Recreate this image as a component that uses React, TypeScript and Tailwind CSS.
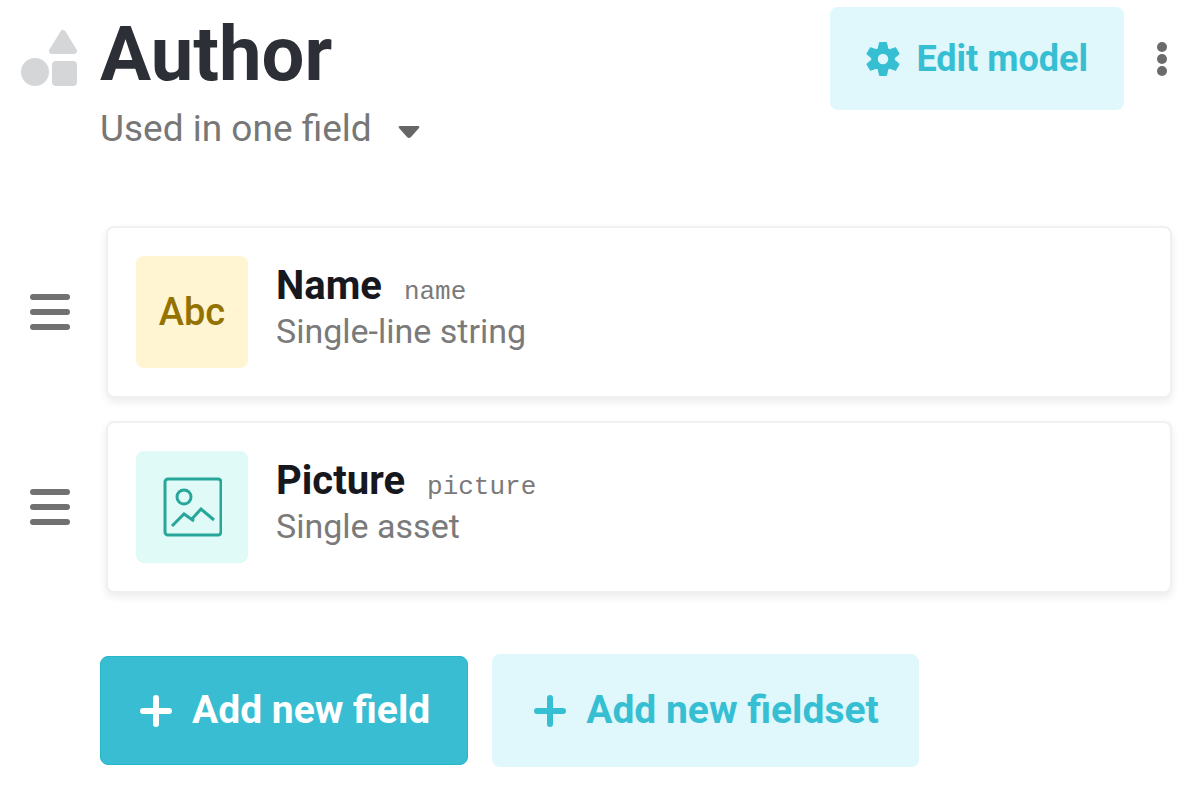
import type { ReactNode } from "react";

function ModelIcon() {
  return (
    <svg viewBox="0 0 58 58" className="h-[58px] w-[58px] shrink-0 fill-[#d4d6d8] stroke-[#d4d6d8]" strokeLinejoin="round" aria-hidden="true">
      <path d="M43 4 54 22H32Z" strokeWidth="6" />
      <circle cx="15" cy="43" r="14" stroke="none" />
      <rect x="32" y="32" width="25" height="25" rx="4" stroke="none" />
    </svg>
  );
}

function GearIcon() {
  return (
    <svg viewBox="0 0 34 34" className="h-[34px] w-[34px] shrink-0" fill="currentColor" aria-hidden="true">
      <circle cx="17" cy="17" r="8.5" fill="none" stroke="currentColor" strokeWidth="6.5" />
      {[0, 60, 120, 180, 240, 300].map((angle) => (
        <path key={angle} d="M13.5 .5H20.5L22 8H12Z" strokeLinejoin="round" stroke="currentColor" transform={`rotate(${angle} 17 17)`} />
      ))}
    </svg>
  );
}

function PlusIcon() {
  return (
    <svg viewBox="0 0 34 34" className="h-[34px] w-[34px] shrink-0" stroke="currentColor" strokeWidth="6" strokeLinecap="round" aria-hidden="true">
      <path d="M18 4V30M5 17H31" />
    </svg>
  );
}

function PictureIcon() {
  return (
    <svg viewBox="0 0 60 60" className="h-[60px] w-[60px]" fill="none" stroke="#27a69a" strokeWidth="3" aria-hidden="true">
      <rect x="3" y="2" width="56" height="56" rx="3" />
      <circle cx="22" cy="20" r="7" />
      <path d="M10 49 22 37 32 44M29 43 39 32 52 43" />
    </svg>
  );
}

function DragHandle({ label }: { label: string }) {
  return (
    <button type="button" aria-label={label} className="flex w-10 shrink-0 cursor-grab flex-col gap-[9px]">
      <span className="h-1.5 w-full rounded-sm bg-[#717171]" />
      <span className="h-1.5 w-full rounded-sm bg-[#717171]" />
      <span className="h-1.5 w-full rounded-sm bg-[#717171]" />
    </button>
  );
}

type FieldRowProps = {
  name: string;
  apiKey: string;
  type: string;
  tile: string;
  children: ReactNode;
};

function FieldRow({ name, apiKey, type, tile, children }: FieldRowProps) {
  return (
    <li className="flex items-center gap-9">
      <DragHandle label={`Reorder ${name}`} />
      <div className="flex min-w-0 flex-1 gap-7 rounded-lg border-2 border-[#f0f0f0] bg-white p-7 shadow-[0_4px_8px_rgba(0,0,0,0.08)]">
        <div className={`flex h-28 w-28 shrink-0 items-center justify-center rounded-lg ${tile}`}>{children}</div>
        <div className="min-w-0 pt-2">
          <div className="flex items-baseline gap-[22px]">
            <h2 className="text-[40px] leading-[44px] font-bold text-[#17181d]">{name}</h2>
            <code className="font-['Liberation_Mono',monospace] text-[26px] leading-[40px] text-[#7a7a7a]">{apiKey}</code>
          </div>
          <p className="text-[34px] leading-[38px] text-[#7a7a7a]">{type}</p>
        </div>
      </div>
    </li>
  );
}

export default function App() {
  return (
    <main className="min-h-screen bg-white pr-7 pb-8 pl-5 pt-[7px] font-['Roboto',sans-serif]">
      <header className="flex items-start">
        <div className="pt-[22px]">
          <ModelIcon />
        </div>
        <div className="min-w-0 flex-1 pl-[22px]">
          <h1 className="text-[76px] leading-[94px] font-bold text-[#2d2f36]">Author</h1>
          <button type="button" className="flex items-center gap-[26px] text-[37px] leading-[56px] text-[#777777]">
            Used in one field
            <svg viewBox="0 0 22 18" className="h-[18px] w-[22px] fill-[#666666]" aria-hidden="true">
              <path d="M2 6H20Q22 6 21 8L13 17Q11 19 9 17L1 8Q0 6 2 6Z" />
            </svg>
          </button>
        </div>
        <button type="button" className="flex h-[103px] items-center gap-4 rounded-lg bg-[#e0f7fc] px-9 text-[36px] font-bold text-[#36bfd2]">
          <GearIcon />
          Edit model
        </button>
        <button type="button" aria-label="More actions" className="ml-7 flex h-[103px] w-5 items-center justify-center">
          <svg viewBox="0 0 10 34" className="h-[34px] w-[10px] fill-[#6b6b6b]" aria-hidden="true">
            <circle cx="5" cy="5" r="5" />
            <circle cx="5" cy="17" r="5" />
            <circle cx="5" cy="29" r="5" />
          </svg>
        </button>
      </header>

      <ul className="mt-[69px] space-y-[23px] pl-[10px]">
        <FieldRow name="Name" apiKey="name" type="Single-line string" tile="bg-[#fff5d2]">
          <span className="text-[38px] font-medium text-[#937200]">Abc</span>
        </FieldRow>
        <FieldRow name="Picture" apiKey="picture" type="Single asset" tile="bg-[#dffaf7]">
          <PictureIcon />
        </FieldRow>
      </ul>

      <div className="mt-[61px] flex items-center gap-6 pl-20 text-[39px] font-bold">
        <button type="button" className="flex h-[109px] items-center gap-5 rounded-lg border border-[#25b8cb] bg-[#38bdd2] px-[37px] text-white">
          <PlusIcon />
          Add new field
        </button>
        <button type="button" className="flex h-[113px] items-center gap-5 rounded-lg bg-[#e0f7fc] px-10 text-[#36bfd2]">
          <PlusIcon />
          Add new fieldset
        </button>
      </div>
    </main>
  );
}
